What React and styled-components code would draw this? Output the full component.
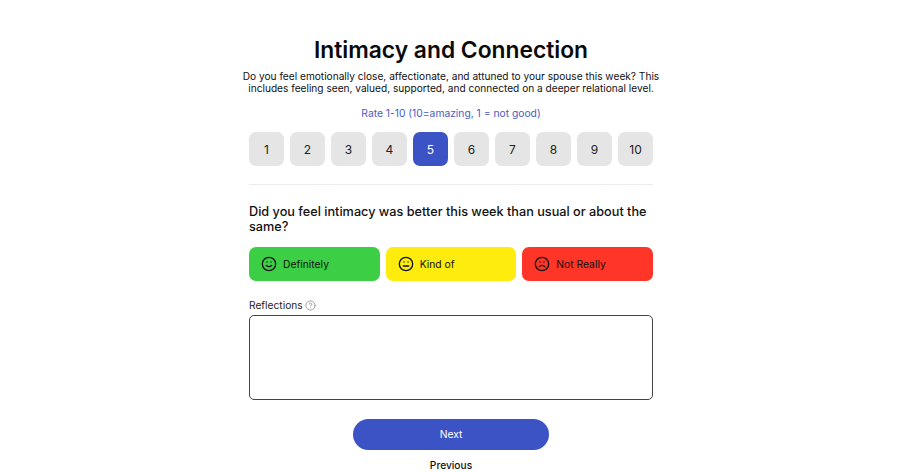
import React from "react";
import styled, { createGlobalStyle } from "styled-components";
import { Smile, Meh, Frown, CircleHelp } from "lucide-react";

const GlobalStyle = createGlobalStyle`
  html, body {
    margin: 0;
    height: 100%;
    background: #fff;
    overflow: hidden;
  }
  * {
    box-sizing: border-box;
  }
`;

const Page = styled.div`
  width: 900px;
  height: 472px;
  padding: 34px 0 0 2px;
  display: flex;
  flex-direction: column;
  align-items: center;
  font-family: Inter, sans-serif;
  color: #000;
  > * {
    flex-shrink: 0;
  }
`;

const Title = styled.h1`
  margin: 0;
  font-size: 22.8px;
  line-height: 32px;
  font-weight: 600;
  color: #0a0a0a;
`;

const Intro = styled.p`
  margin: 4px 0 0;
  width: 430px;
  font-size: 10.15px;
  line-height: 12px;
  text-align: center;
  color: #111;
`;

const RateHint = styled.div`
  margin-top: 12px;
  font-size: 10.3px;
  line-height: 14px;
  color: #4a5cc4;
`;

const Content = styled.div`
  width: 404px;
  display: flex;
  flex-direction: column;
`;

const Scale = styled.div`
  margin-top: 12px;
  display: flex;
  justify-content: space-between;
`;

const ScaleButton = styled.button`
  width: 35px;
  height: 34px;
  padding: 0;
  border: 0;
  border-radius: 7px;
  font-family: inherit;
  font-size: 12px;
  background: ${(p) => (p.$active ? "#3b53c4" : "#e5e5e5")};
  color: ${(p) => (p.$active ? "#fff" : "#222")};
`;

const Divider = styled.hr`
  margin: 18px 0 0;
  border: 0;
  border-top: 1px solid #ececec;
`;

const Question = styled.h2`
  margin: 19px 0 0;
  font-size: 12.7px;
  line-height: 15px;
  font-weight: 500;
  color: #111;
`;

const Choices = styled.div`
  margin-top: 13px;
  display: grid;
  grid-template-columns: repeat(3, 1fr);
  gap: 6px;
`;

const Choice = styled.button`
  height: 34px;
  padding: 0 0 0 12px;
  border: 0;
  border-radius: 7px;
  display: flex;
  align-items: center;
  gap: 6px;
  font-family: inherit;
  font-size: 10.3px;
  color: #111;
  background: ${(p) => p.$color};
`;

const Label = styled.label`
  margin-top: 17px;
  display: flex;
  align-items: center;
  gap: 2px;
  font-size: 10.2px;
  line-height: 14px;
  color: #222;
  svg {
    color: #777;
  }
`;

const Reflections = styled.textarea`
  margin-top: 3px;
  height: 85px;
  border: 1px solid #444;
  border-radius: 5px;
  resize: none;
  outline: none;
  background: #fff;
`;

const Next = styled.button`
  margin-top: 19px;
  width: 196px;
  height: 31px;
  padding: 0 0 2px;
  border: 0;
  border-radius: 16px;
  font-family: inherit;
  font-size: 10.3px;
  font-weight: 400;
  color: #fff;
  background: #3b53c4;
`;

const Previous = styled.button`
  margin-top: 9px;
  padding: 0;
  border: 0;
  background: none;
  font-family: inherit;
  font-size: 10.2px;
  line-height: 13px;
  font-weight: 500;
  color: #111;
`;

const ratings = [1, 2, 3, 4, 5, 6, 7, 8, 9, 10];

const choices = [
  { label: "Definitely", color: "#3ccf45", Icon: Smile },
  { label: "Kind of", color: "#ffec0f", Icon: Meh },
  { label: "Not Really", color: "#ff3527", Icon: Frown },
];

const App = () => {
  return (
    <Page>
      <GlobalStyle />
      <Title>Intimacy and Connection</Title>
      <Intro>
        Do you feel emotionally close, affectionate, and attuned to your spouse
        this week? This includes feeling seen, valued, supported, and connected
        on a deeper relational level.
      </Intro>
      <RateHint>Rate 1-10 (10=amazing, 1 = not good)</RateHint>
      <Content>
        <Scale>
          {ratings.map((n) => (
            <ScaleButton key={n} $active={n === 5}>
              {n}
            </ScaleButton>
          ))}
        </Scale>
        <Divider />
        <Question>
          Did you feel intimacy was better this week than usual or about the
          same?
        </Question>
        <Choices>
          {choices.map(({ label, color, Icon }) => (
            <Choice key={label} $color={color}>
              <Icon size={16} strokeWidth={2} />
              {label}
            </Choice>
          ))}
        </Choices>
        <Label>
          Reflections
          <CircleHelp size={11} strokeWidth={1.5} />
        </Label>
        <Reflections />
      </Content>
      <Next>Next</Next>
      <Previous>Previous</Previous>
    </Page>
  );
};

export default App;
